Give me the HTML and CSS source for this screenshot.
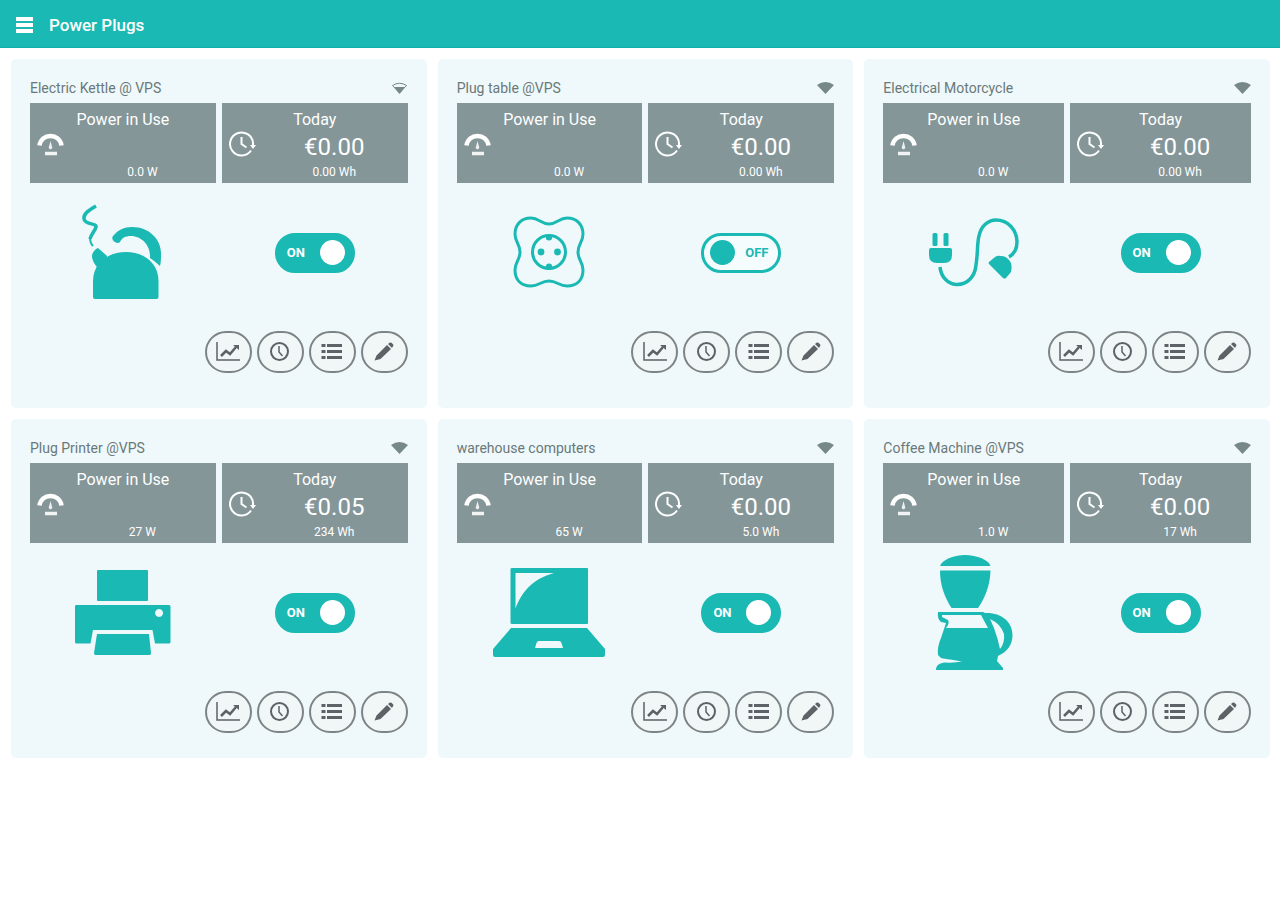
FILE: index.html
```
<!DOCTYPE html>
<html lang="en">

<head>
    <meta charset="UTF-8">
    <meta name="viewport" content="width=device-width, initial-scale=1.0">
    <title>Power Plugs</title>
    <link rel="stylesheet" href="styles.css">
</head>

<body>
    <header class="topbar">
        <button type="button" class="menu-btn" aria-label="Menu">
            <svg width="18" height="18" viewBox="0 0 18 18"><path d="M0 1h17v4H0zM0 7h17v4H0zM0 13h17v4H0z" fill="currentColor"/></svg>
        </button>
        <h1>Power Plugs</h1>
    </header>

    <main class="plug-grid" id="plug-grid"></main>

    <script src="plugs.js"></script>
</body>

</html>
```
FILE: styles.css
```
* {
    box-sizing: border-box;
}

body {
    margin: 0;
    background: #fff;
    color: #6a7879;
    font-family: Roboto, "Liberation Sans", sans-serif;
}

button {
    padding: 0;
    border: 0;
    background: none;
    color: inherit;
    cursor: pointer;
}

svg {
    display: block;
}

.topbar {
    display: flex;
    align-items: center;
    gap: 15px;
    height: 48px;
    padding: 2px 16px 0;
    background: #1bb9b3;
    border-bottom: 1px solid #0eb0a9;
    color: #fff;
}

.topbar h1 {
    margin: 0;
    font-size: 17px;
    font-weight: 500;
    line-height: 20px;
}

.plug-grid {
    display: grid;
    grid-template-columns: repeat(3, 1fr);
}

.plug-cell {
    padding: 11px 0 0 11px;
}

.plug-cell:nth-child(3n) {
    padding-right: 10px;
}

.plug-card {
    padding: 19px 19px 35px;
    border-radius: 5px;
    background: #eff9fb;
}

.plug-cell:nth-child(n+4) .plug-card {
    padding-bottom: 25px;
}

.plug-header {
    display: flex;
    align-items: center;
    justify-content: space-between;
    height: 20px;
    margin-bottom: 5px;
}

.plug-header h2 {
    margin: 0;
    font-size: 14px;
    font-weight: 400;
    line-height: 22px;
}

.wifi {
    color: #768888;
}

.tiles {
    display: grid;
    grid-template-columns: 1fr 1fr;
    gap: 6px;
}

.tile {
    padding: 8px 0 4px;
    background: #849698;
    color: #fff;
    text-align: center;
}

.tile h3 {
    margin: 0;
    font-size: 16px;
    font-weight: 400;
    line-height: 18px;
}

.tile-body {
    display: flex;
}

.tile-icon {
    width: 39px;
    padding: 1px 0 0 7px;
}

.tile-values {
    flex: 1;
}

.tile-main {
    height: 36px;
    font-size: 24px;
    line-height: 36px;
}

.tile-sub {
    font-size: 12px;
    line-height: 14px;
}

.plug-body {
    display: grid;
    grid-template-columns: 1fr 1fr;
    gap: 6px;
    align-items: center;
    justify-items: center;
    height: 139px;
}

.device {
    color: #1bb9b3;
}

.toggle {
    display: flex;
    align-items: center;
    justify-content: space-between;
    width: 80px;
    height: 40px;
    padding: 0 7px 0 9px;
    border: 3px solid #1bb9b3;
    border-radius: 20px;
    background: #1bb9b3;
    color: #fff;
    font-size: 13px;
    font-weight: 700;
    cursor: pointer;
}

.toggle input {
    width: 25px;
    height: 25px;
    margin: 0;
    appearance: none;
    border-radius: 50%;
    background: #fff;
    cursor: pointer;
}

.toggle.off {
    flex-direction: row-reverse;
    padding: 0 10px 0 6px;
    background: #f5fcfd;
    color: #1bb9b3;
}

.toggle.off input {
    background: #1bb9b3;
}

.actions {
    display: flex;
    justify-content: flex-end;
    gap: 5px;
    margin-top: 9px;
}

.actions button {
    display: flex;
    align-items: center;
    justify-content: center;
    width: 47px;
    height: 42px;
    border: 2px solid #7d8485;
    border-radius: 23px;
    background: #f1f6f6;
    color: #5c6265;
}
```
FILE: plugs.js
```
const plugs = [
    { name: 'Electric Kettle @ VPS', icon: 'kettle', power: '0.0 W', cost: '€0.00', energy: '0.00 Wh', on: true, weak: true },
    { name: 'Plug table @VPS', icon: 'socket', power: '0.0 W', cost: '€0.00', energy: '0.00 Wh', on: false },
    { name: 'Electrical Motorcycle', icon: 'cable', power: '0.0 W', cost: '€0.00', energy: '0.00 Wh', on: true },
    { name: 'Plug Printer @VPS', icon: 'printer', power: '27 W', cost: '€0.05', energy: '234 Wh', on: true },
    { name: 'warehouse computers', icon: 'laptop', power: '65 W', cost: '€0.00', energy: '5.0 Wh', on: true },
    { name: 'Coffee Machine @VPS', icon: 'coffee', power: '1.0 W', cost: '€0.00', energy: '17 Wh', on: true }
];

// device drawings, all on a 120x120 box
const devices = {
    kettle: `
        <path d="M33 13C26 17 20 21 21 26C22 32 34 30 33 34C32 38 28 41 27 46" fill="none" stroke="currentColor" stroke-width="3.5"/>
        <path d="M27 44C27 48 28 51 30 53" fill="none" stroke="currentColor" stroke-width="2"/>
        <path d="M35 55l8 7c2 2 1 3 0 4l-8 9c-3-3-6-8-6-12 0-3 3-7 6-8z"/>
        <path d="M30 104V88C30 70 45 59 63 59S95.500 70 95.500 88v16q0 2-2 2H32q-2 0-2-2z"/>
        <path d="M50 43C55 37 61 34 69 34C87 34 98 47 98 60C98 65 98 70 97 73C94 70 91 68 87 65C88 53 79 43 68 43C62 43 59 45 57 49C54 52 47 47 50 43z"/>`,
    socket: `
        <g fill="none" stroke="currentColor" stroke-width="3">
            <path d="M59 31C67 31 69 25 77 25C87 25 93 32 93 41C93 49 88 51 88 59C88 67 93 69 93 77C93 87 87 93 77 93C69 93 67 88 59 88C51 88 49 93 41 93C31 93 25 87 25 77C25 69 30 67 30 59C30 51 25 49 25 41C25 32 31 25 41 25C49 25 51 31 59 31z"/>
            <circle cx="59" cy="59" r="16.5"/>
        </g>
        <circle cx="51" cy="59" r="3.4"/><circle cx="67.500" cy="59" r="3.4"/>
        <path d="M56 43h6v2a3 2.500 0 0 1-6 0zM56 75h6v-2a3 2.500 0 0 0-6 0z"/>`,
    cable: `
        <rect x="18.500" y="40" width="5" height="13" rx="1.5"/><rect x="29.500" y="40" width="5" height="13" rx="1.5"/>
        <path d="M15 57q0-2 2-2h19q2 0 2 2v5q0 8-8 8h-7q-8 0-8-8z"/>
        <path d="M26 74C27 84 34 91 42 91.500C54 92 61 83 62 72C64 60 63 50 65 43C67 33 74 27 82 27C94 27 103 37 103 49C103 55 100 61 95 64" fill="none" stroke="currentColor" stroke-width="3.500"/>
        <path d="M75 71q-1-1 0-2l6-5q3-2 6-1q5 0 8 4c3 3 3 8 2 12l-5 6q-1.500 1-3 0z"/>`,
    printer: `
        <rect x="34" y="17" width="51" height="31" rx="1"/>
        <path fill-rule="evenodd" d="M13 52h93q1.500 0 1.500 1.500V89q0 1.500-1.500 1.500H92L89.500 77H30l-2.500 13.500H13.500q-1.500 0-1.500-1.500V53.500q0-1.500 1-1.500zM96 56a4 4 0 1 0 .1 0z"/>
        <path d="M34 81h52l2 19q0 2-1.500 2h-54q-1.500 0-1.500-2z"/>`,
    laptop: `
        <path fill-rule="evenodd" d="M22 15h75q1 0 1 1v54q0 1-1 1H22q-1.500 0-1.500-1V16q0-1 1.500-1zM25.500 20v35.500C32 38 43 26 64 20z"/>
        <path fill-rule="evenodd" d="M21 75h76l18 21v6q0 2-2 2H5q-2 0-2-2v-6zM49 88q-2 0-2.500 2L45 95h28l-1.500-5q-.5-2-2.500-2z"/>`,
    coffee: `
        <path d="M26 13C28 7 39 2 51 2S75 7 76.500 13z"/>
        <path d="M26 17.500h50.500C76 33 71 45 64 55H37.500C31 45 26 33 26 17.500z"/>
        <path fill-rule="evenodd" d="M24 59h45l2 1C86 59 98.500 68 98.500 82C98.500 92 93 99 84 103L83 108L89 115V117H22C22 112 26 110 31 109.500Q40 110 48 108.500C40 107 32 106 27 105L24 102Q23 94 27 85L32 70L27 69Q23 66 24 59zM28 62V64L34 67Q36 70 32 75H74L67 62zM76 66L80 75Q84 86 86 96Q91 90 90 81Q87 71 76 66z"/>`
};

const gaugeIcon = `
    <svg width="27" height="27" viewBox="0 0 27 27">
        <path d="M2.500 15.500C3.500 9.500 8 6 13.500 6S23.500 9.500 24.500 15.500" fill="none" stroke="currentColor" stroke-width="4.500"/>
        <path d="M13.500 11l1.500 5.500a1.800 1.800 0 1 1-3 0z" fill="currentColor" opacity=".85"/>
        <path d="M8 23.500h12" stroke="currentColor" stroke-width="3.500" opacity=".9"/>
    </svg>`;

const todayIcon = `
    <svg width="27" height="27" viewBox="0 0 27 27" fill="none" stroke="currentColor" stroke-width="2">
        <path d="M22 20.500A11.500 11.500 0 1 1 24 13v4"/>
        <path d="M12.500 7v7l5 3.500"/>
        <path d="M21 15h6l-3 4z" fill="currentColor" stroke="none"/>
    </svg>`;

const actionIcons = [
    ['Chart', '<path d="M1 1v18h23" fill="none" stroke="currentColor" stroke-width="1.500"/><path d="M5 15l5-5 4 3 6-7" fill="none" stroke="currentColor" stroke-width="2.500"/><path d="M17 4h6v5z"/>'],
    ['Timer', '<circle cx="11.500" cy="10.500" r="8.500" fill="none" stroke="currentColor" stroke-width="2"/><path d="M11 5v6l3.500 4" fill="none" stroke="currentColor" stroke-width="1.500"/>'],
    ['List', '<path d="M1.500 3h4v3h-4zM7 3h15v3H7zM1.500 9h4v3h-4zM7 9h15v3H7zM1.500 15h4v3h-4zM7 15h15v3H7z"/>'],
    ['Edit', '<path d="M2.500 19.500l2-5L15 4l4 4L8.500 18zM16 3l1.500-1.200q1-.8 2 0l1.500 1.500q1 1 0 2L20 7z"/>']
];

function wifiIcon(weak) {
    const bars = weak
        ? '<path d="M1.500 4.500Q8.500 0 15.500 4.500L8.500 12z" fill="none" stroke="currentColor" stroke-width="1"/><path d="M3 6h11L8.500 13z" fill="currentColor"/>'
        : '<path d="M0 4Q8.500-2 17 4L8.500 13z" fill="currentColor"/>';
    return `<svg class="wifi" width="17" height="14" viewBox="0 0 17 14">${bars}</svg>`;
}

function tile(title, icon, main, sub) {
    return `
        <section class="tile">
            <h3>${title}</h3>
            <div class="tile-body">
                <div class="tile-icon">${icon}</div>
                <div class="tile-values">
                    <div class="tile-main">${main}</div>
                    <div class="tile-sub">${sub}</div>
                </div>
            </div>
        </section>`;
}

function renderPlug(plug, index) {
    const buttons = actionIcons.map(([label, shape]) => `
        <button type="button" aria-label="${label}">
            <svg width="24" height="22" viewBox="0 0 24 22" fill="currentColor">${shape}</svg>
        </button>`).join('');

    return `
        <div class="plug-cell">
            <article class="plug-card">
                <div class="plug-header">
                    <h2>${plug.name}</h2>
                    ${wifiIcon(plug.weak)}
                </div>
                <div class="tiles">
                    ${tile('Power in Use', gaugeIcon, '', plug.power)}
                    ${tile('Today', todayIcon, plug.cost, plug.energy)}
                </div>
                <div class="plug-body">
                    <svg class="device" width="120" height="120" viewBox="0 0 120 120" fill="currentColor">${devices[plug.icon]}</svg>
                    <label class="toggle ${plug.on ? '' : 'off'}" for="plug-${index}">
                        <span>${plug.on ? 'ON' : 'OFF'}</span>
                        <input type="checkbox" id="plug-${index}" ${plug.on ? 'checked' : ''}>
                    </label>
                </div>
                <div class="actions">${buttons}</div>
            </article>
        </div>`;
}

const grid = document.getElementById('plug-grid');
grid.innerHTML = plugs.map(renderPlug).join('');

grid.addEventListener('change', (e) => {
    const toggle = e.target.closest('.toggle');
    toggle.classList.toggle('off', !e.target.checked);
    toggle.querySelector('span').textContent = e.target.checked ? 'ON' : 'OFF';
});
```
